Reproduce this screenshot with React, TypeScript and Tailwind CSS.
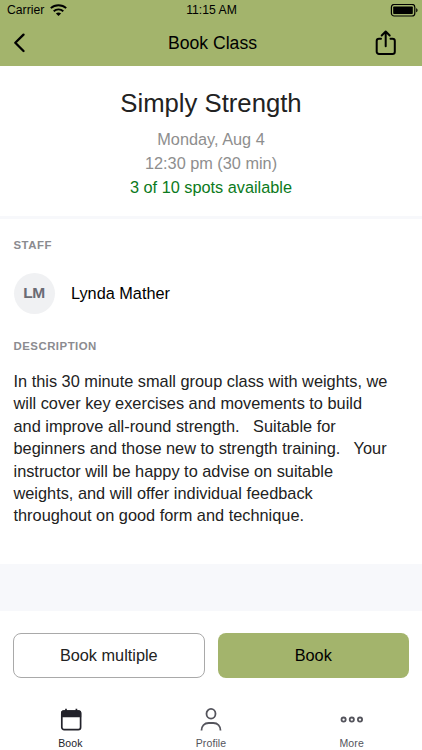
import type { ReactNode } from "react";

const description = [
    "In this 30 minute small group class with weights, we",
    "will cover key exercises and movements to build",
    "and improve all-round strength.   Suitable for",
    "beginners and those new to strength training.   Your",
    "instructor will be happy to advise on suitable",
    "weights, and will offer individual feedback",
    "throughout on good form and technique.",
];

function StatusBar() {
    return (
        <div className="grid h-5 grid-cols-3 items-center pl-[7px] pr-1 text-[12.2px]">
            <div className="flex items-center gap-[6px]">
                <span>Carrier</span>
                <svg width="17" height="12" viewBox="0 0 17 12" fill="none" stroke="black" strokeWidth="1.9">
                    <path d="M.8 4.1C5 .2 12 .2 16.2 4.1" />
                    <path d="M3.7 7.2c2.7-2.5 6.9-2.5 9.6 0" />
                    <path d="M8.5 12 5.9 9.5c1.5-1.3 3.7-1.3 5.2 0z" fill="black" stroke="none" />
                </svg>
            </div>
            <span className="pr-[2px] text-center">11:15 AM</span>
            <svg className="justify-self-end" width="28" height="13" viewBox="0 0 28 13">
                <rect x="1.4" y=".4" width="23.4" height="11.6" rx="2.8" fill="none" stroke="black" strokeWidth="1.2" />
                <rect x="3.2" y="2.4" width="19.6" height="7.6" rx=".8" />
                <path d="M26.2 4.2c1.8.5 1.8 3.5 0 4z" />
            </svg>
        </div>
    );
}

function Header() {
    return (
        <header className="h-[66px] bg-[#a3b46c] text-black">
            <StatusBar />
            <div className="grid h-[46px] grid-cols-3 items-center pl-[13px] pr-6">
                <svg width="13" height="20" viewBox="0 0 13 20" fill="none" stroke="black" strokeWidth="2.3" strokeLinecap="round" strokeLinejoin="round">
                    <path d="M10.5 1.6 2.3 9.8l8.2 8.2" />
                </svg>
                <h1 className="pl-[14px] text-center text-[17.6px] whitespace-nowrap">Book Class</h1>
                <svg className="justify-self-end" width="24" height="26" viewBox="0 0 24 26" fill="none" stroke="black" strokeWidth="2" strokeLinecap="round" strokeLinejoin="round">
                    <path d="M7 8.8H5a2.3 2.3 0 0 0-2.3 2.3v10.6A2.3 2.3 0 0 0 5 24h13.5a2.3 2.3 0 0 0 2.3-2.3V11.1a2.3 2.3 0 0 0-2.3-2.3h-2" />
                    <path d="M11.7 16.2V2M7.7 5.5l4-4 4 4" />
                </svg>
            </div>
        </header>
    );
}

function Label({ children }: { children: ReactNode }) {
    return <h3 className="text-[11.4px] leading-4 font-bold tracking-[0.5px] text-[#8b8b8f]">{children}</h3>;
}

function Tab({ label, color, children }: { label: string; color: string; children: ReactNode }) {
    return (
        <div className={`flex flex-col items-center ${color}`}>
            <div className="flex h-7 items-center">{children}</div>
            <span className="mt-[3px] text-[10.5px] leading-[13px] tracking-[0.1px]">{label}</span>
        </div>
    );
}

export default function App() {
    return (
        <div className="flex h-[750px] w-[422px] flex-col overflow-hidden bg-white font-['Liberation_Sans',Arial,sans-serif] text-[#222]">
            <Header />

            <section className="h-[150px] pt-[19px] text-center text-[16.3px] leading-[24.2px] text-[#8e8e8e]">
                <h2 className="mb-[6px] text-[25.7px] leading-9 text-[#222]">Simply Strength</h2>
                <p>Monday, Aug 4</p>
                <p>12:30 pm (30 min)</p>
                <p className="text-[#0b7a20]">3 of 10 spots available</p>
            </section>
            <div className="h-[3px] bg-[#f7f8fb]" />

            <section className="h-[345px] px-[13.5px] pt-[17.5px]">
                <Label>STAFF</Label>
                <div className="mt-5 mb-6 flex items-center gap-[16.5px]">
                    <div className="flex h-[41px] w-[41px] items-center justify-center rounded-full bg-[#f0f1f3] text-[15.5px] font-bold tracking-[-0.4px] text-[#6a6b74]">LM</div>
                    <span className="text-[16.3px] text-black">Lynda Mather</span>
                </div>
                <Label>DESCRIPTION</Label>
                <div className="mt-[16.5px] text-[16.33px] leading-[22.4px] whitespace-pre">
                    {description.map((line) => (
                        <p key={line}>{line}</p>
                    ))}
                </div>
            </section>
            <div className="h-[47px] bg-[#f7f8fb]" />

            <div className="grid grid-cols-2 gap-[13px] px-[13px] pt-[22px] text-[16.3px]">
                <button className="h-[45px] rounded-lg border border-[#a9a9a9]">Book multiple</button>
                <button className="h-[45px] rounded-lg bg-[#a3b46c] text-black">Book</button>
            </div>

            <nav className="mt-7 grid grid-cols-3">
                <Tab label="Book" color="text-[#22222a]">
                    <svg className="ml-[2px]" width="22" height="24" viewBox="0 0 22 24" fill="none" stroke="currentColor" strokeWidth="1.7">
                        <rect x="1.8" y="3.1" width="18.8" height="18.6" rx="2.4" />
                        <path d="M1.1 9.3V4.8a2.5 2.5 0 0 1 2.5-2.5h15.1a2.5 2.5 0 0 1 2.5 2.5v4.5z" fill="currentColor" stroke="none" />
                        <path d="M6 .8v4M16.4.8v4" />
                    </svg>
                </Tab>
                <Tab label="Profile" color="text-[#54545c]">
                    <svg width="22" height="24" viewBox="0 0 22 24" fill="none" stroke="currentColor" strokeWidth="1.8">
                        <ellipse cx="11" cy="5.8" rx="4.5" ry="4.9" />
                        <path d="M1.5 22.6c0-4.6 2.9-7.6 7.2-7.6h4.6c4.3 0 7.2 3 7.2 7.6" />
                    </svg>
                </Tab>
                <Tab label="More" color="text-[#54545c]">
                    <svg width="24" height="8" viewBox="0 0 24 8" fill="none" stroke="currentColor" strokeWidth="1.8">
                        <circle cx="3.6" cy="3.6" r="2.1" />
                        <circle cx="11.8" cy="3.6" r="2.1" />
                        <circle cx="20" cy="3.6" r="2.1" />
                    </svg>
                </Tab>
            </nav>
        </div>
    );
}
